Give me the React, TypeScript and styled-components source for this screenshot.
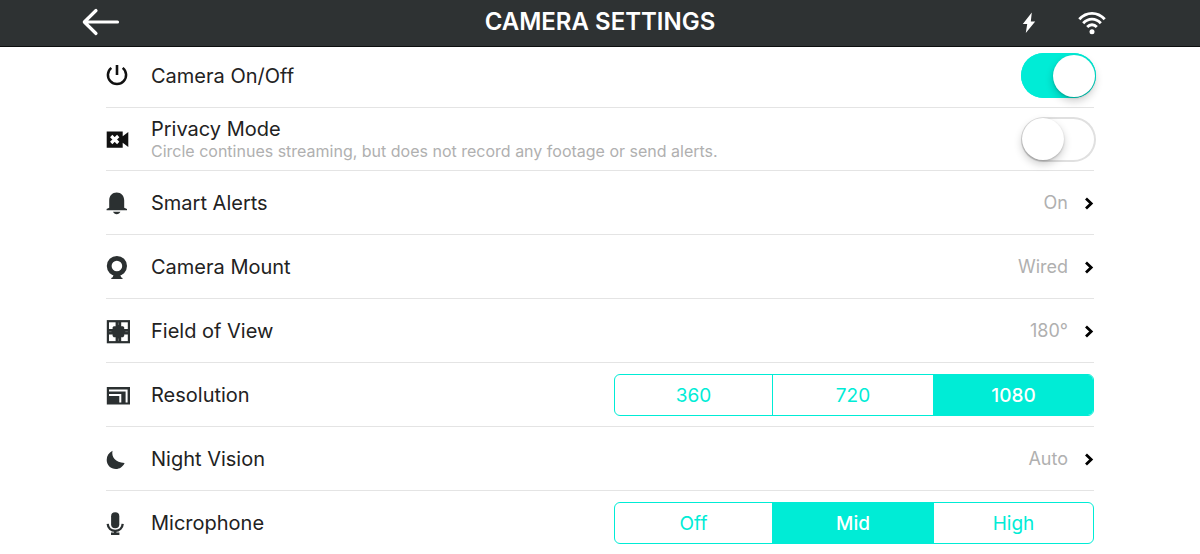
import React, { useState } from "react";
import styled, { createGlobalStyle } from "styled-components";

const teal = "#00ecd6";
const ink = "#2b3031";

const GlobalStyle = createGlobalStyle`
  *, *::before, *::after { box-sizing: border-box; }
  body {
    margin: 0;
    background: #fff;
    color: #222;
    font-family: Inter, "Liberation Sans", sans-serif;
    overflow: hidden;
  }
  button { font: inherit; color: inherit; background: none; border: 0; padding: 0; cursor: pointer; }
`;

const Header = styled.header`
  display: grid;
  grid-template-columns: 1fr auto 1fr;
  align-items: center;
  height: 47px;
  padding: 0 94px 2px 82px;
  background: #2e3233;
  border-bottom: 1px solid #0d0f0f;
  color: #fff;
`;

const Title = styled.h1`
  margin: 0;
  padding-left: 12px;
  font-size: 24px;
  line-height: 28px;
  font-weight: 600;
`;

const BackButton = styled.button`
  display: flex;
  justify-self: start;
`;

const StatusIcons = styled.div`
  display: flex;
  align-items: center;
  justify-content: flex-end;
  gap: 42px;
`;

const List = styled.ul`
  list-style: none;
  margin: 0;
  padding: 0 106px;
`;

const Row = styled.li<{ $height?: number }>`
  display: flex;
  align-items: center;
  min-height: ${(p) => p.$height ?? 64}px;
  padding-top: ${(p) => (p.$height ? 0 : 1)}px;
  border-bottom: 1px solid #e4e4e4;
  &:first-child { padding-bottom: 3px; }
  &:last-child { border-bottom-color: transparent; }
`;

const RowButton = styled.button`
  display: flex;
  align-items: center;
  flex: 1;
  align-self: stretch;
  text-align: left;
`;

const IconSlot = styled.span`
  display: flex;
  flex: none;
  width: 45px;
  color: ${ink};
`;

const Text = styled.span`
  display: flex;
  flex-direction: column;
  flex: 1;
`;

const Label = styled.span`
  font-size: 20px;
  line-height: 24px;
  font-weight: 400;
`;

const Hint = styled.span`
  font-size: 16px;
  line-height: 20px;
  font-weight: 400;
  color: #b0b0b0;
`;

const Value = styled.span`
  margin-right: 16px;
  font-size: 18px;
  line-height: 24px;
  font-weight: 400;
  color: #b0b0b0;
`;

const Switch = styled.input`
  appearance: none;
  flex: none;
  display: flex;
  align-items: center;
  width: 75px;
  height: 45px;
  margin: 0 -2px 0 0;
  padding: 0 1px;
  border-radius: 23px;
  background: #fff;
  box-shadow: inset 0 0 0 2px #e0e0e0;
  cursor: pointer;
  &::before {
    content: "";
    width: 42px;
    height: 42px;
    border-radius: 50%;
    background: #fff;
    box-shadow: 0 4px 9px rgba(0, 0, 0, 0.2), 0 1px 2px rgba(0, 0, 0, 0.2);
  }
  &:checked {
    justify-content: flex-end;
    background: ${teal};
    box-shadow: inset 0 0 0 2px ${teal};
  }
`;

const Segments = styled.div`
  display: grid;
  grid-template-columns: 157fr 161fr 160fr;
  flex: 0 1 480px;
  height: 42px;
  border: 1px solid ${teal};
  border-radius: 6px;
  overflow: hidden;
`;

const Segment = styled.label`
  display: flex;
  align-items: center;
  justify-content: center;
  padding-top: 2px;
  font-size: 19px;
  line-height: 24px;
  font-weight: 400;
  color: ${teal};
  cursor: pointer;
  &:not(:first-child) { border-left: 1px solid ${teal}; }
  &:has(input:checked) { background: ${teal}; color: #fff; font-weight: 500; }
`;

const SegmentInput = styled.input`
  appearance: none;
  width: 0;
  height: 0;
  margin: 0;
`;

const Svg = ({ children }: { children: React.ReactNode }) => (
  <svg width="24" height="25" viewBox="0 0 24 25" fill="currentColor" aria-hidden="true">
    {children}
  </svg>
);

const icons = {
  power: (
    <Svg>
      <path d="M5.3 4.9a9.1 9.1 0 1 0 11.4 0" fill="none" stroke="#111" strokeWidth="2.5" />
      <path d="M9.7 2h2.6v10H9.7z" fill="#111" />
    </Svg>
  ),
  privacy: (
    <Svg>
      <path d="M.7 4.500h16v4.800L22.300 5v15l-5.600-4.300v5H.7z" fill="#111" />
      <path d="M5.200 9l7 7M12.200 9l-7 7" stroke="#fff" strokeWidth="3.200" />
    </Svg>
  ),
  bell: (
    <Svg>
      <path d="M3.200 16.700V9.400C3.200 4.900 6.300 1.600 10.700 1.600s7.500 3.300 7.500 7.800v7.300l2.800 1.200v1.300H.6v-1.300z" />
      <path d="M7 20.700h7.400c-.7 1.600-2 2.500-3.700 2.500S7.700 22.300 7 20.700z" />
    </Svg>
  ),
  mount: (
    <Svg>
      <circle cx="10.900" cy="11" r="7.700" fill="none" stroke="currentColor" strokeWidth="4.800" />
      <path d="M7.500 20h6.800l.8 2.300 1.400.8v1H5.300v-1l1.400-.8z" />
    </Svg>
  ),
  view: (
    <Svg>
      <rect x="1.900" y="2.200" width="21" height="21" fill="none" stroke="currentColor" strokeWidth="2.200" />
      <path d="M9.600 2h5.600v5.200h1.900l1.100 1.100v1.600H23v5.600h-4.800v1.600l-1.100 1.100h-1.900V23H9.600v-4.800H7.700l-1.100-1.100v-1.600H2V9.900h4.600V8.300l1.100-1.100h1.900z" />
      <path d="M12.400 3.500v2.500M12.400 19.500v2.500M3 12.700h2.500M19.300 12.700h2.500" stroke="#5f6464" strokeWidth="1" />
    </Svg>
  ),
  resolution: (
    <Svg>
      <path d="M.8 4h23.200v17.500H.8z" />
      <path d="M3 7.500h17.600v12M3 12.100h11.300v7.400" fill="none" stroke="#fff" strokeWidth="2" />
    </Svg>
  ),
  night: (
    <Svg>
      <path d="M6.500 3.800C5.200 9.800 9.500 16 18.600 15.900 16.900 19.800 13.500 21.900 9.900 21.900 4.700 21.900.700 18 .700 12.900.700 9 2.800 5.600 6.500 3.800z" />
    </Svg>
  ),
  mic: (
    <Svg>
      <rect x="5.100" y="1.300" width="8.200" height="16" rx="4.100" />
      <path d="M1.700 12.800c.3 4.300 3.300 7 7.500 7s7.200-2.700 7.500-7" fill="none" stroke="currentColor" strokeWidth="2.300" />
      <path d="M8 20h2.400v1.600h3V24H5v-2.400h3z" />
    </Svg>
  ),
};

const Chevron = () => (
  <svg width="10" height="13" viewBox="0 0 10 13" fill="none" stroke="#000" strokeWidth="2.800" aria-hidden="true">
    <path d="M2 1.500l5.200 5-5.200 5" />
  </svg>
);

type RowProps = { icon: keyof typeof icons; label: string };

function ToggleRow({ icon, label, hint, height, initial }: RowProps & { hint?: string; height: number; initial: boolean }) {
  const [on, setOn] = useState(initial);
  const id = `switch-${icon}`;
  return (
    <Row $height={height}>
      <IconSlot>{icons[icon]}</IconSlot>
      <Text>
        <Label as="label" htmlFor={id}>{label}</Label>
        {hint && <Hint>{hint}</Hint>}
      </Text>
      <Switch id={id} type="checkbox" role="switch" checked={on} onChange={() => setOn(!on)} />
    </Row>
  );
}

function LinkRow({ icon, label, value }: RowProps & { value: string }) {
  return (
    <Row>
      <RowButton type="button">
        <IconSlot>{icons[icon]}</IconSlot>
        <Text><Label>{label}</Label></Text>
        <Value>{value}</Value>
        <Chevron />
      </RowButton>
    </Row>
  );
}

function ChoiceRow({ icon, label, options, initial }: RowProps & { options: string[]; initial: string }) {
  const [choice, setChoice] = useState(initial);
  return (
    <Row>
      <IconSlot>{icons[icon]}</IconSlot>
      <Text><Label id={`label-${icon}`}>{label}</Label></Text>
      <Segments role="radiogroup" aria-labelledby={`label-${icon}`}>
        {options.map((o) => (
          <Segment key={o}>
            <SegmentInput type="radio" name={icon} checked={choice === o} onChange={() => setChoice(o)} />
            {o}
          </Segment>
        ))}
      </Segments>
    </Row>
  );
}

export default function App() {
  return (
    <>
      <GlobalStyle />
      <Header>
        <BackButton type="button" aria-label="Back">
          <svg width="38" height="28" viewBox="0 0 38 28" fill="none" stroke="#fff" strokeWidth="3.200" strokeLinecap="round" strokeLinejoin="round">
            <path d="M14 2.500L2.300 14 14 25.500M2.500 14H35.500" />
          </svg>
        </BackButton>
        <Title>CAMERA SETTINGS</Title>
        <StatusIcons>
          <svg width="14" height="24" viewBox="0 0 14 24" fill="#fff" aria-hidden="true">
            <path d="M9.800 2.500L.800 14h4.400L3.800 23 13.200 11.500H8.800z" />
          </svg>
          <svg width="28" height="26" viewBox="0 0 28 26" fill="none" stroke="#fff" strokeWidth="2.800" aria-hidden="true">
            <path d="M1.300 10.300C8.500 2.300 19.500 2.300 26.700 10.300M5.200 14.200c5-5.500 12.600-5.500 17.600 0M9.200 18c2.700-3 6.900-3 9.600 0" />
            <circle cx="14" cy="22.800" r="2.500" fill="#fff" stroke="none" />
          </svg>
        </StatusIcons>
      </Header>
      <List>
        <ToggleRow icon="power" label="Camera On/Off" height={61} initial={true} />
        <ToggleRow
          icon="privacy"
          label="Privacy Mode"
          hint="Circle continues streaming, but does not record any footage or send alerts."
          height={63}
          initial={false}
        />
        <LinkRow icon="bell" label="Smart Alerts" value="On" />
        <LinkRow icon="mount" label="Camera Mount" value="Wired" />
        <LinkRow icon="view" label="Field of View" value="180°" />
        <ChoiceRow icon="resolution" label="Resolution" options={["360", "720", "1080"]} initial="1080" />
        <LinkRow icon="night" label="Night Vision" value="Auto" />
        <ChoiceRow icon="mic" label="Microphone" options={["Off", "Mid", "High"]} initial="Mid" />
      </List>
    </>
  );
}
